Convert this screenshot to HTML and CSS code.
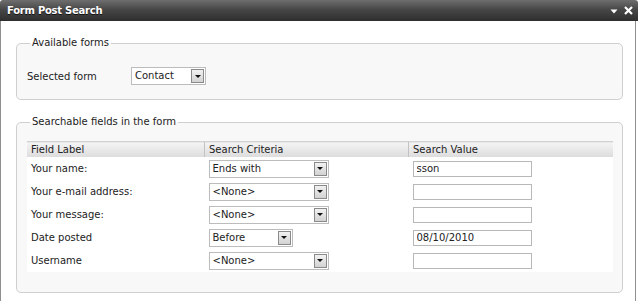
FILE: index.html
```html
<!DOCTYPE html>
<html lang="en">
<head>
  <meta charset="UTF-8">
  <meta name="viewport" content="width=device-width, initial-scale=1.0">
  <title>Form Post Search</title>
  <link rel="stylesheet" href="styles.css">
</head>
<body>

  <div class="window">
    <div class="titlebar">
      <span class="title">Form Post Search</span>
      <span class="title-tools">
        <svg class="tool" width="8" height="8" viewBox="0 0 8 8"><path d="M0.5 2.5h7l-3.5 4z" fill="#fff"/></svg>
        <svg class="tool" width="9" height="9" viewBox="0 0 9 9"><path d="M1 1l7 7M8 1l-7 7" stroke="#fff" stroke-width="2.2"/></svg>
      </span>
    </div>

    <div class="window-body">
      <fieldset class="group group-forms">
        <legend>Available forms</legend>
        <div class="form-row">
          <label class="form-label">Selected form</label>
          <div class="select select-form">
            <span class="select-value">Contact</span>
            <span class="select-btn"></span>
          </div>
        </div>
      </fieldset>

      <fieldset class="group group-fields">
        <legend>Searchable fields in the form</legend>
        <table class="fields-table">
          <thead>
            <tr>
              <th class="col-label">Field Label</th>
              <th class="col-criteria">Search Criteria</th>
              <th>Search Value</th>
            </tr>
          </thead>
          <tbody>
            <tr>
              <td>Your name:</td>
              <td><div class="select select-wide"><span class="select-value">Ends with</span><span class="select-btn"></span></div></td>
              <td><input class="text-input" type="text" value="sson"></td>
            </tr>
            <tr>
              <td>Your e-mail address:</td>
              <td><div class="select select-wide"><span class="select-value">&lt;None&gt;</span><span class="select-btn"></span></div></td>
              <td><input class="text-input" type="text" value=""></td>
            </tr>
            <tr>
              <td>Your message:</td>
              <td><div class="select select-wide"><span class="select-value">&lt;None&gt;</span><span class="select-btn"></span></div></td>
              <td><input class="text-input" type="text" value=""></td>
            </tr>
            <tr>
              <td>Date posted</td>
              <td><div class="select select-date"><span class="select-value">Before</span><span class="select-btn"></span></div></td>
              <td><input class="text-input" type="text" value="08/10/2010"></td>
            </tr>
            <tr>
              <td>Username</td>
              <td><div class="select select-wide"><span class="select-value">&lt;None&gt;</span><span class="select-btn"></span></div></td>
              <td><input class="text-input" type="text" value=""></td>
            </tr>
          </tbody>
        </table>
      </fieldset>
    </div>
  </div>

</body>
</html>
```

FILE: styles.css
```css
/* General Styles */
body {
  font-family: 'DejaVu Sans', 'Liberation Sans', sans-serif;
  font-size: 10px;
  color: #222;
  background-color: #fff;
  margin: 0;
  padding: 0;
}

.window {
  width: 638px;
}

/* Title bar */
.titlebar {
  height: 21px;
  display: flex;
  align-items: center;
  justify-content: space-between;
  padding: 0 5px 0 7px;
  background: linear-gradient(#6e6e6e, #474747 45%, #2e2e2e);
  border-radius: 3px 3px 0 0;
}

.title {
  color: #fff;
  font-weight: bold;
  letter-spacing: -0.25px;
  text-shadow: 0 1px 0 #111;
}

.title-tools {
  display: flex;
  align-items: center;
  gap: 6px;
}

.tool {
  display: block;
}

/* Window body */
.window-body {
  margin-right: 2px;
  border-left: 1px solid #8f8f8f;
  border-right: 1px solid #8f8f8f;
  padding: 15px 12px 10px 15px;
  height: 280px;
  box-sizing: border-box;
}

.group {
  margin: 0;
  min-width: 0;
  border: 1px solid #cfcfcf;
  border-radius: 5px;
  background-color: #f8f8f8;
}

.group legend {
  margin-left: 3px;
  padding: 0 2px;
  line-height: 14px;
}

.group-forms {
  padding: 17px 9px 14px 10px;
}

.group-fields {
  margin-top: 15px;
  padding: 12px 9px 20px 10px;
}

.form-row {
  display: flex;
  align-items: center;
}

.form-label {
  width: 104px;
}

/* Selects */
.select {
  display: flex;
  align-items: center;
  height: 18px;
  box-sizing: border-box;
  border: 1px solid #bcbcbc;
  background-color: #fff;
}

.select-value {
  flex: 1;
  padding-left: 3px;
  line-height: 16px;
}

.select-btn {
  width: 13px;
  height: 14px;
  margin-right: 1px;
  box-sizing: border-box;
  border: 1px solid #8a8a8a;
  background: linear-gradient(#f2f2f2, #d2d2d2);
  display: flex;
  align-items: center;
  justify-content: center;
}

.select-btn::after {
  content: '';
  border-left: 3px solid transparent;
  border-right: 3px solid transparent;
  border-top: 3px solid #111;
}

.select-form {
  width: 75px;
}

.select-wide {
  width: 120px;
}

.select-date {
  width: 84px;
}

/* Table styles */
.fields-table {
  width: 100%;
  border-collapse: collapse;
  border-spacing: 0;
  background-color: #fff;
}

.fields-table th {
  height: 15px;
  padding: 0 4px;
  text-align: left;
  font-weight: normal;
  border-top: 1px solid #d2d2d2;
  background: linear-gradient(#f4f4f4, #dcdcdc);
}

.fields-table th + th {
  border-left: 1px solid #c2c2c2;
}

.fields-table .col-label {
  width: 169px;
}

.fields-table .col-criteria {
  width: 195px;
}

.fields-table td {
  height: 23px;
  padding: 0 4px;
  vertical-align: middle;
}

.text-input {
  display: block;
  width: 119px;
  height: 16px;
  box-sizing: border-box;
  margin: 0;
  padding: 0 3px;
  border: 1px solid #b8b8b8;
  font-family: inherit;
  font-size: 10px;
  color: #222;
}
```
